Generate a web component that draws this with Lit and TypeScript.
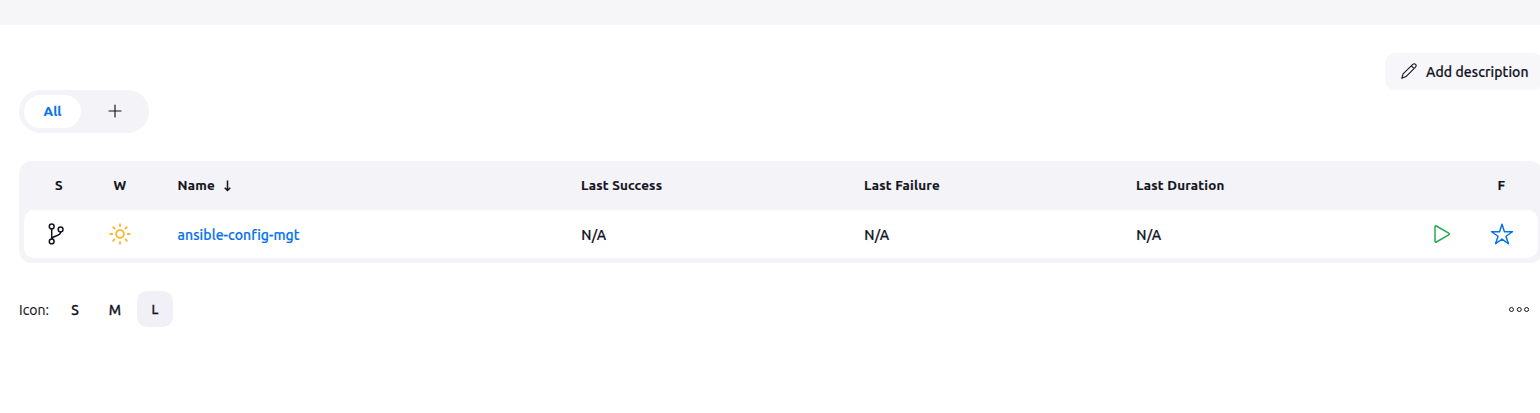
import { LitElement, html, css } from "lit";
import { customElement, property } from "lit/decorators.js";

@customElement("project-tabs")
class ProjectTabs extends LitElement {
  static styles = css`
    .bar { display: flex; width: 120px; height: 33px; padding: 5px; border-radius: 22px; background: #f3f3f8; }
    .tab { display: flex; flex: none; align-items: center; justify-content: center; box-sizing: border-box; padding-bottom: 1px; }
    .active { width: 57px; border-radius: 17px; background: #fff; color: #0572eb; font-weight: 700; font-size: 13.6px; -webkit-text-stroke-width: 0.15px; }
    .new { width: 68px; }
  `;
  render() {
    return html`<div class="bar">
      <div class="tab active">All</div>
      <div class="tab new">
        <svg width="14" height="14" viewBox="0 0 14 14" fill="none" stroke="#14141f" stroke-width="1.15" stroke-linecap="round"><path d="M7 1v12M1 7h12" /></svg>
      </div>
    </div>`;
  }
}

@customElement("jobs-table")
class JobsTable extends LitElement {
  static styles = css`
    .table { padding: 0 5px 5px; border-radius: 13px; background: #f3f3f8; }
    .row { display: grid; grid-template-columns: 70px 52px 435px 283px 272px 275px 61px 59px; align-items: center; box-sizing: border-box; }
    .head { height: 49px; padding-top: 1px; font-size: 13.4px; font-weight: 700; letter-spacing: 0.23px; -webkit-text-stroke-width: 0.15px; }
    .body { height: 48px; border-radius: 10px; background: #fff; font-size: 14px; font-weight: 500; -webkit-text-stroke-width: 0.2px; }
    .center { display: flex; justify-content: center; }
    .branch { padding-right: 7px; }
    .name { display: flex; align-items: center; gap: 7.5px; padding-left: 31.6px; }
    .link { color: #0572eb; letter-spacing: 0.08px; }
    .value { padding: 1px 0 0; }
    .spaced { padding-left: 0.3px; letter-spacing: 0.3px; }
  `;
  render() {
    return html`<div class="table">
      <div class="row head">
        <div class="center">S</div>
        <div class="center">W</div>
        <div class="name"><span>Name</span>
          <svg width="9" height="12" viewBox="0 0 9 12" fill="none" stroke="#14141f" stroke-width="1.5"><path d="M4.5 .5v10M1.7 7.8l2.8 2.7 2.8-2.7" /></svg>
        </div>
        <div>Last Success</div>
        <div>Last Failure</div>
        <div>Last Duration</div>
        <div></div>
        <div class="center">F</div>
      </div>
      <div class="row body">
        <div class="center branch">
          <svg width="18" height="24" viewBox="0 0 18 24" fill="none" stroke="#14141f" stroke-width="1.5" stroke-linecap="round">
            <circle cx="4.7" cy="4.5" r="2.4" /><circle cx="4.7" cy="19.4" r="2.4" /><circle cx="13.6" cy="7.5" r="2.4" />
            <path d="M4.7 7v10M13.6 10c0 4.8-8.3 3-8.9 7" />
          </svg>
        </div>
        <div class="center">
          <svg width="24" height="24" viewBox="0 0 24 24" fill="none" stroke="#fdb62f" stroke-width="1.8" stroke-linecap="round">
            <circle cx="12" cy="12" r="3.9" />
            <path d="M12 2.2v2M12 19.8v2M2.2 12h2M19.8 12h2M5.1 5.1l1.4 1.4M17.5 17.5l1.4 1.4M5.1 18.9l1.4-1.4M17.5 6.5l1.4-1.4" />
          </svg>
        </div>
        <div class="name"><span class="link value">ansible-config-mgt</span></div>
        <div class="value spaced">N/A</div>
        <div class="value spaced">N/A</div>
        <div class="value spaced">N/A</div>
        <div class="center">
          <svg width="18" height="20" viewBox="0 0 18 20" fill="none" stroke="#22a850" stroke-width="1.45" stroke-linejoin="round">
            <path d="M2 2.8v14.4c0 .8.7 1.2 1.4.8l12.3-7.1c.7-.4.7-1.4 0-1.8L3.4 2c-.7-.4-1.4 0-1.4.8z" />
          </svg>
        </div>
        <div class="center">
          <svg width="24" height="24" viewBox="0 0 512 512" fill="none" stroke="#0572eb" stroke-width="32" stroke-linejoin="round">
            <path d="M480 208H308L256 48l-52 160H32l140 96-54 160 138-100 138 100-54-160z" />
          </svg>
        </div>
      </div>
    </div>`;
  }
}

@customElement("size-picker")
class SizePicker extends LitElement {
  @property() selected = "L";
  static styles = css`
    .bar { display: flex; align-items: center; height: 36px; font-size: 14px; }
    .label { width: 38px; padding-top: 2px; letter-spacing: 0.05px; -webkit-text-stroke-width: 0.15px; }
    .sizes { display: flex; gap: 4px; }
    .size { display: flex; align-items: center; justify-content: center; box-sizing: border-box; width: 36px; height: 36px; padding-top: 2px; border-radius: 10px; font-size: 14px; font-weight: 500; -webkit-text-stroke-width: 0.3px; }
    .on { padding-top: 0; background: #f1f0f7; font-size: 13px; }
    .more { margin-left: auto; display: flex; margin-right: 13px; }
  `;
  render() {
    return html`<div class="bar">
      <div class="label">Icon:</div>
      <div class="sizes">
        ${["S", "M", "L"].map((s) => html`<div class="size ${s === this.selected ? "on" : ""}">${s}</div>`)}
      </div>
      <div class="more">
        <svg width="22" height="9" viewBox="0 0 22 9" fill="none" stroke="#14141f" stroke-width="1"><circle cx="3.5" cy="4.5" r="2" /><circle cx="11.3" cy="4.5" r="2" /><circle cx="18.6" cy="4.5" r="2" /></svg>
      </div>
    </div>`;
  }
}

@customElement("app-root")
class AppRoot extends LitElement {
  static styles = css`
    :host { display: block; height: 413px; overflow: hidden; background: #fff; color: #14141f; font-family: Ubuntu, "Noto Sans", "Open Sans", sans-serif; line-height: 20px; }
    .crumbs { height: 25px; background: #f6f6f9; }
    .main { display: flex; flex-direction: column; width: 1524px; padding: 28px 0 0 19px; }
    .add { display: flex; align-items: center; align-self: flex-end; width: 142px; height: 37px; padding-left: 16px; border-radius: 10px; background: #f7f7fa; gap: 9px; font-size: 14px; font-weight: 500; letter-spacing: 0.08px; white-space: nowrap; -webkit-text-stroke-width: 0.2px; }
    .pen { margin-bottom: 1px; }
    .jobs { display: block; margin: 28px 0; }
  `;
  render() {
    return html`
      <div class="crumbs"></div>
      <div class="main">
        <div class="add">
          <svg class="pen" width="16" height="16" viewBox="0 0 16 16" fill="none" stroke="#14141f" stroke-width="1.1" stroke-linejoin="round">
            <path d="M.8 15.2l1.3-4.3L11.8 1.4c.8-.8 1.9-.8 2.7 0s.8 1.9 0 2.7L5 13.6zM10.4 2.8l2.8 2.8" />
          </svg>
          <span>Add description</span>
        </div>
        <project-tabs></project-tabs>
        <jobs-table class="jobs"></jobs-table>
        <size-picker></size-picker>
      </div>
    `;
  }
}
